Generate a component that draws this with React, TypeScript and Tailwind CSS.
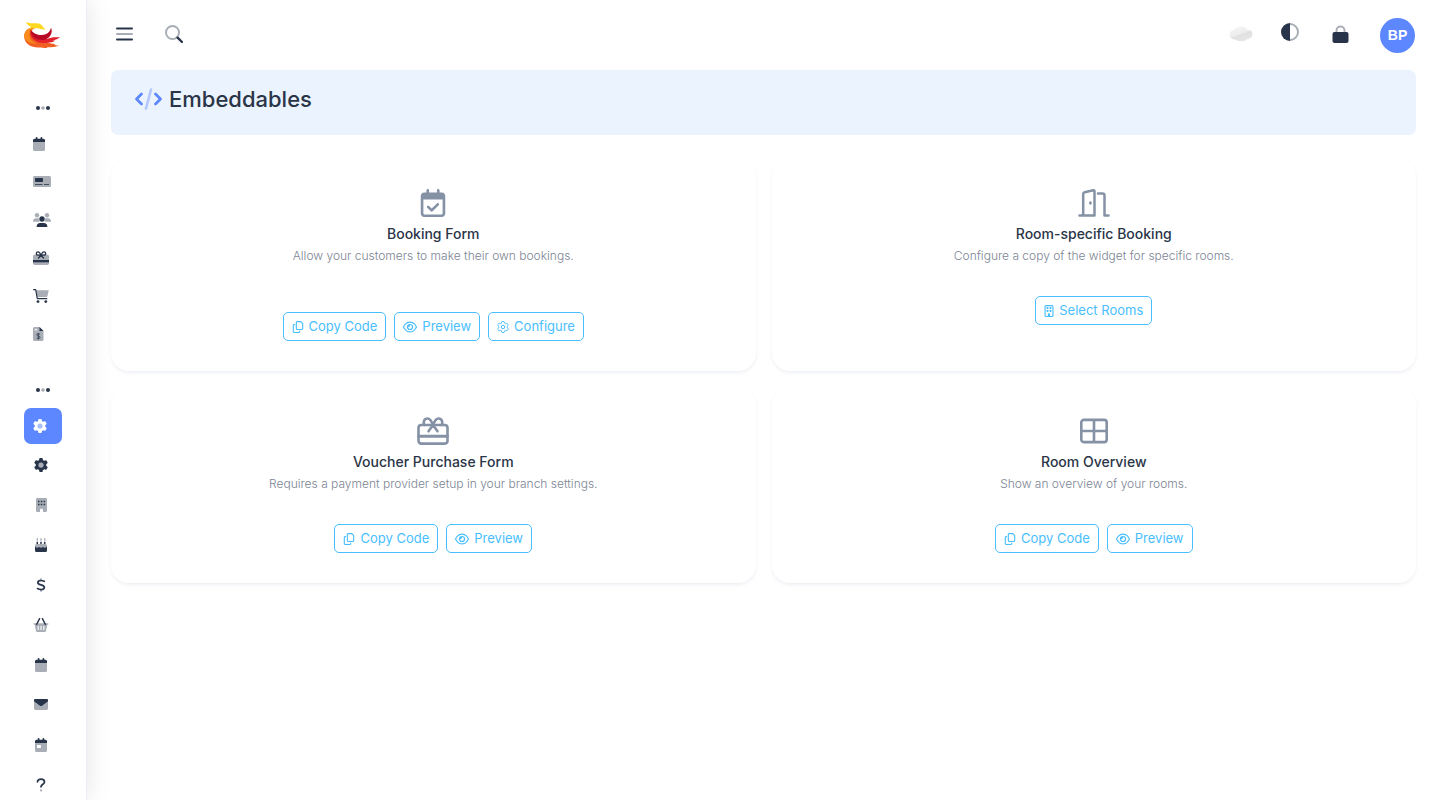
import type { ReactNode } from "react";
import { FaRegBuilding, FaRegCalendarCheck, FaRegCopy, FaRegEye } from "react-icons/fa6";

const DARK = "#283449";
const SOFT = "#a9aeb6";

const GEAR =
  "M495.9 166.6c3.2 8.7 .5 18.4-6.4 24.6l-43.3 39.4c1.1 8.3 1.7 16.8 1.7 25.4s-.6 17.1-1.7 25.4l43.3 39.4c6.9 6.2 9.6 15.9 6.4 24.6c-4.4 11.9-9.7 23.3-15.8 34.3l-4.7 8.1c-6.6 11-14 21.4-22.1 31.2c-5.9 7.2-15.7 9.6-24.5 6.8l-55.7-17.7c-13.4 10.3-28.2 18.9-44 25.4l-12.5 57.1c-2 9.1-9 16.3-18.2 17.8c-13.8 2.3-28 3.5-42.5 3.5s-28.7-1.2-42.5-3.5c-9.2-1.5-16.2-8.7-18.2-17.8l-12.5-57.1c-15.8-6.5-30.6-15.1-44-25.4L83.1 425.9c-8.8 2.8-18.6 .3-24.5-6.8c-8.1-9.8-15.5-20.2-22.1-31.2l-4.7-8.1c-6.1-11-11.4-22.4-15.8-34.3c-3.2-8.7-.5-18.4 6.4-24.6l43.3-39.4C64.6 273.1 64 264.6 64 256s.6-17.1 1.7-25.4L22.4 191.2c-6.9-6.2-9.6-15.9-6.4-24.6c4.4-11.9 9.7-23.3 15.8-34.3l4.7-8.1c6.6-11 14-21.4 22.1-31.2c5.9-7.2 15.7-9.6 24.5-6.8l55.7 17.7c13.4-10.3 28.2-18.9 44-25.4l12.5-57.1c2-9.1 9-16.3 18.2-17.8C227.3 1.2 241.5 0 256 0s28.7 1.2 42.5 3.5c9.2 1.5 16.2 8.7 18.2 17.8l12.5 57.1c15.8 6.5 30.6 15.1 44 25.4l55.7-17.7c8.8-2.8 18.6-.3 24.5 6.8c8.1 9.8 15.5 20.2 22.1 31.2l4.7 8.1c6.1 11 11.4 22.4 15.8 34.3z";

function Svg({ w, h, children }: { w: number; h: number; children: ReactNode }) {
  return (
    <svg width={w} height={h} viewBox={`0 0 ${w} ${h}`} fill="none" aria-hidden="true" className="shrink-0">
      {children}
    </svg>
  );
}

function Logo() {
  return (
    <svg width="37" height="28" viewBox="0 0 37 28" aria-hidden="true">
      <path d="M9 6.500C3 7 0 11 .2 16C.6 22.500 7 26.500 14 26.500C18 26.300 20 27.300 23 27C24 26.600 23 26.300 23 25.900C28 26.500 32 26 35 24.600C31 24.500 30 23.500 31 23C28 23 26 22 23 21.500C14 20 8 16 8 10Z" fill="#f15f22" />
      <path d="M.2 16C0 10 4 6.500 10 6.500L12 7C8 8 5.500 11 5.500 14C5.500 18 8 21 13 22.500C7 22.500 2 21 .2 16Z" fill="#fa8b1c" />
      <path d="M6.500 9C5 16 10 21 18 22C24 22.500 30 21 31 19.500L28 19.500C31 19 35 17.500 36.500 16C32 16.600 29 15.500 26 17C19 20 10 16 6.500 9Z" fill="#e3212b" />
      <path d="M6.500 8.500C9.500 12.500 13 14 17.500 14C22.500 14 26.500 11 27 6.500C29.500 12 25.500 19 18 19C11 19 7 15 6.500 8.500Z" fill="#b80a24" />
      <path d="M2 1C6 3 11 1.600 15 2.500C18 3.200 19 7 22 8.300C18 9 15 7 11 7C9 7 7 7.500 5 8.300C6 7 6.500 6.500 7 5.700C5 5 3 3.500 2 1Z" fill="#ffd91f" />
    </svg>
  );
}

function Dots() {
  return (
    <Svg w={14} h={4}>
      <circle cx="2" cy="2" r="2" fill={DARK} />
      <circle cx="7" cy="2" r="1.800" fill={SOFT} />
      <circle cx="12" cy="2" r="2" fill={DARK} />
    </Svg>
  );
}

function Calendar({ day = false }: { day?: boolean }) {
  return (
    <Svg w={12} h={14}>
      <path d="M0 5H12V12.500A1.500 1.500 0 0 1 10.500 14H1.500A1.500 1.500 0 0 1 0 12.500Z" fill={SOFT} />
      <path d="M0 5V3.200A1.500 1.500 0 0 1 1.500 1.700H2.700V1A.9 .9 0 0 1 4.500 1V1.700H7.500V1A.9 .9 0 0 1 9.300 1V1.700H10.500A1.500 1.500 0 0 1 12 3.200V5Z" fill={DARK} />
      {day && <rect x="2" y="7" width="4" height="3" rx=".5" fill="#fff" />}
    </Svg>
  );
}

function CashRegister() {
  return (
    <Svg w={18} h={12}>
      <rect width="18" height="11" rx="1.500" fill={SOFT} />
      <rect x="2" y="2" width="8" height="4" rx=".8" fill={DARK} />
      <path d="M2 8.500H9.500M11 8.500H16" stroke={DARK} strokeWidth=".8" />
    </Svg>
  );
}

function Users() {
  return (
    <Svg w={18} h={14}>
      <g fill={SOFT}>
        <circle cx="4" cy="2.200" r="2.200" />
        <circle cx="14" cy="2.200" r="2.200" />
        <path d="M0 8.300C0 6.500 1.200 5.200 2.800 5.200H4.500C5.200 5.200 5.700 5.400 6 5.600C5.700 7 6 7.800 6.700 8.700H0Z" />
        <path d="M18 8.300C18 6.500 16.800 5.200 15.200 5.200H13.500C12.800 5.200 12.300 5.400 12 5.600C12.300 7 12 7.800 11.300 8.700H18Z" />
      </g>
      <circle cx="9" cy="6" r="2.700" fill={DARK} />
      <path d="M3.600 14C3.600 11.500 5 10 7.200 10H10.800C13 10 14.400 11.500 14.400 14Z" fill={DARK} />
    </Svg>
  );
}

function GiftCard() {
  return (
    <Svg w={16} h={14}>
      <rect y="3.500" width="16" height="10.500" rx="1.800" fill={SOFT} />
      <rect y="9" width="16" height="2.300" fill={DARK} />
      <path d="M8 4.200C7 1.500 6 .8 5 .8A1.700 1.700 0 0 0 5 4.200H11A1.700 1.700 0 0 0 11 .8C10 .8 9 1.500 8 4.200L5.500 7M8 4.200L10.500 7" stroke={DARK} strokeWidth="1.300" strokeLinecap="round" />
    </Svg>
  );
}

function Cart() {
  return (
    <Svg w={16} h={14}>
      <path d="M3 1.200H15.800L14.400 7.200A1 1 0 0 1 13.400 8H4.300Z" fill={SOFT} />
      <path d="M.6 .7H2.700L4.300 9.700H13.800" stroke={DARK} strokeWidth="1.200" strokeLinecap="round" strokeLinejoin="round" />
      <circle cx="5" cy="12.600" r="1.400" fill={DARK} />
      <circle cx="12.800" cy="12.600" r="1.400" fill={DARK} />
    </Svg>
  );
}

function Invoice() {
  return (
    <Svg w={11} h={14}>
      <path d="M1.500 0H6.500L10.500 4V12.500A1.500 1.500 0 0 1 9 14H1.500A1.500 1.500 0 0 1 0 12.500V1.500A1.500 1.500 0 0 1 1.500 0Z" fill={SOFT} />
      <path d="M6.500 0L10.500 4H6.500Z" fill={DARK} />
      <rect x="1.800" y="1.800" width="2.400" height="1.800" fill="#e8e9eb" />
      <path d="M7 7.200C4.500 6.200 3.400 7.300 3.800 8.200C4.300 9.300 7 8.900 7 10.400C7 11.700 5 11.800 3.600 11M5.300 6V12.500" stroke={DARK} strokeWidth=".8" />
    </Svg>
  );
}

function Gear({ body, core }: { body: string; core: string }) {
  return (
    <svg width="14" height="14" viewBox="0 0 512 512" aria-hidden="true" className="shrink-0">
      <path d={GEAR} fill={body} />
      <circle cx="256" cy="256" r="96" fill={core} />
    </svg>
  );
}

function Hotel() {
  return (
    <Svg w={11} h={14}>
      <path d="M1.200 0H9.800A1.200 1.200 0 0 1 11 1.200V12.800A1.200 1.200 0 0 1 9.800 14H7V12A1.500 1.500 0 0 0 4 12V14H1.200A1.200 1.200 0 0 1 0 12.800V1.200A1.200 1.200 0 0 1 1.200 0Z" fill={SOFT} />
      <path d="M2 3.500H3.500M4.800 3.500H6.300M7.600 3.500H9.100M2 6.500H3.500M4.800 6.500H6.300M7.600 6.500H9.100" stroke={DARK} strokeWidth="1.300" />
    </Svg>
  );
}

function Cake() {
  return (
    <Svg w={12} h={14}>
      <path d="M2.300 .3V2.800M6 .3V2.800M9.700 .3V2.800" stroke={SOFT} strokeWidth="1.400" />
      <path d="M2.300 3.700V6M6 3.700V6M9.700 3.700V6" stroke={DARK} strokeWidth="1.500" />
      <path d="M0 9V7.500A1.500 1.500 0 0 1 1.500 6H10.500A1.500 1.500 0 0 1 12 7.500V10H0Z" fill={SOFT} />
      <path d="M0 8.500C1.500 10 2.500 10 4 9C5.500 10 6.500 10 8 9C9.500 10 10.500 10 12 8.500V12.500A1.500 1.500 0 0 1 10.500 14H1.500A1.500 1.500 0 0 1 0 12.500Z" fill={DARK} />
    </Svg>
  );
}

function Dollar() {
  return (
    <Svg w={10} h={14}>
      <path d="M5 .7V2.500M5 11.500V13.300" stroke={SOFT} strokeWidth="1.500" strokeLinecap="round" />
      <path d="M8.200 3.300C6 2.200 2 2 1.800 4.500C1.700 7.800 8.300 5.900 8.300 9.300C8.300 12.200 4 12 1.500 10.600" stroke={DARK} strokeWidth="1.700" strokeLinecap="round" />
    </Svg>
  );
}

function Basket() {
  return (
    <Svg w={16} h={14}>
      <path d="M.7 5.300H15.300V6.800H14.300L13 12.800A1.400 1.400 0 0 1 11.600 14H4.400A1.400 1.400 0 0 1 3 12.800L1.700 6.800H.7Z" fill={SOFT} />
      <path d="M5.200 8V12M8 8V12M10.800 8V12" stroke="#fff" strokeWidth="1.100" />
      <path d="M6.600 .6L3.600 6.300M9.400 .6L12.400 6.300" stroke={DARK} strokeWidth="1.400" strokeLinecap="round" />
    </Svg>
  );
}

function Mail() {
  return (
    <Svg w={14} h={12}>
      <rect width="14" height="11" rx="1.400" fill={SOFT} />
      <path d="M0 1.300A1.300 1.300 0 0 1 1.300 0H12.700A1.300 1.300 0 0 1 14 1.300V2.200L8 6.700A1.600 1.600 0 0 1 6 6.700L0 2.200Z" fill={DARK} />
    </Svg>
  );
}

function Question() {
  return (
    <Svg w={10} h={14}>
      <path d="M1.500 3.800C1.500 2 2.800 1.200 5 1.200C7.200 1.200 8.500 2.300 8.500 3.900C8.500 6.200 5 6.200 5 8.800" stroke={DARK} strokeWidth="1.700" strokeLinecap="round" />
      <circle cx="5" cy="12.400" r="1.100" fill={SOFT} />
    </Svg>
  );
}

const primaryNav: { label: string; icon: ReactNode }[] = [
  { label: "Calendar", icon: <Calendar /> },
  { label: "Register", icon: <CashRegister /> },
  { label: "Customers", icon: <Users /> },
  { label: "Vouchers", icon: <GiftCard /> },
  { label: "Shop", icon: <Cart /> },
  { label: "Invoices", icon: <Invoice /> },
];

const settingsNav: { label: string; icon: ReactNode }[] = [
  { label: "General", icon: <Gear body={DARK} core={SOFT} /> },
  { label: "Branches", icon: <Hotel /> },
  { label: "Parties", icon: <Cake /> },
  { label: "Pricing", icon: <Dollar /> },
  { label: "Products", icon: <Basket /> },
  { label: "Schedule", icon: <Calendar /> },
  { label: "Mail", icon: <Mail /> },
  { label: "Events", icon: <Calendar day /> },
  { label: "Help", icon: <Question /> },
];

function Sidebar() {
  return (
    <aside className="sticky top-0 flex h-screen w-[87px] shrink-0 flex-col overflow-hidden border-r border-[#e9eff4] bg-white px-6 shadow-[0_0_24px_rgba(0,0,0,0.11)]">
      <a href="#home" aria-label="Home" className="mt-[21px] block h-[69px] w-[37px] shrink-0">
        <Logo />
      </a>
      <nav aria-label="Main" className="flex flex-col">
        <div className="flex h-9 w-[38px] shrink-0 items-center justify-center">
          <Dots />
        </div>
        <ul className="flex flex-col gap-0.5">
          {primaryNav.map((item) => (
            <li key={item.label}>
              <a href="#nav" aria-label={item.label} className="flex h-9 w-[38px] items-center pl-[9px]">
                {item.icon}
              </a>
            </li>
          ))}
        </ul>
        <div className="mt-5 flex h-9 w-[38px] shrink-0 items-center justify-center">
          <Dots />
        </div>
        <a href="#settings" aria-label="Settings" className="flex h-9 w-[38px] shrink-0 items-center rounded-[7px] bg-[#5d87ff] pl-[9px]">
          <Gear body="#fff" core="#a9c0ff" />
        </a>
        <ul className="mt-[3px] flex flex-col gap-1">
          {settingsNav.map((item) => (
            <li key={item.label}>
              <a href="#settings" aria-label={item.label} className="flex h-9 w-[34px] items-center justify-center">
                {item.icon}
              </a>
            </li>
          ))}
        </ul>
      </nav>
    </aside>
  );
}

function Header() {
  return (
    <header className="flex h-[70px] items-center justify-between pr-px pl-[5px]">
      <div className="flex items-center gap-8 pb-0.5">
        <button type="button" aria-label="Toggle menu">
          <Svg w={17} h={16}>
            <path d="M1 2.500H16M1 13.500H16" stroke={DARK} strokeWidth="2" strokeLinecap="round" />
            <path d="M1 8H16" stroke={SOFT} strokeWidth="2" strokeLinecap="round" />
          </Svg>
        </button>
        <button type="button" aria-label="Search">
          <Svg w={18} h={20}>
            <circle cx="7.500" cy="8.500" r="6.500" stroke={SOFT} strokeWidth="2" />
            <path d="M12.600 13.600L17 18" stroke={DARK} strokeWidth="2.300" strokeLinecap="round" />
          </Svg>
        </button>
      </div>
      <div className="flex items-center">
        <div className="mr-[31px] flex items-center pb-0.5">
          <button type="button" aria-label="Weather" className="mr-7">
            <Svg w={24} h={18}>
              <defs>
                <linearGradient id="cloud" x1="8" y1="2" x2="13" y2="16" gradientUnits="userSpaceOnUse">
                  <stop stopColor="#f5f5f5" />
                  <stop offset=".5" stopColor="#ececec" />
                  <stop offset=".6" stopColor="#e0e0e0" />
                  <stop offset="1" stopColor="#e6e6e6" />
                </linearGradient>
              </defs>
              <path d="M5 4.500C6 2.300 9 1.500 12 1.500S17.500 2.200 18.300 4.700C21.500 4.500 23.500 6.500 23.500 9C23.500 12 21 14 18 14.200C16.500 16.500 9 17 6.500 14.500C3 14.500 .7 12.500 .6 9.500C.5 7 2.500 5 5 4.500Z" fill="url(#cloud)" />
            </Svg>
          </button>
          <button type="button" aria-label="Toggle theme" className="mr-[33px] pb-1">
            <Svg w={18} h={18}>
              <path d="M9 1A8 8 0 0 1 9 17" stroke={SOFT} strokeWidth="2" />
              <path d="M9 0A9 9 0 0 0 9 18Z" fill={DARK} />
            </Svg>
          </button>
          <button type="button" aria-label="Lock">
            <Svg w={17} h={18}>
              <path d="M4.500 8V5.500A4 4 0 0 1 12.500 5.500V8" stroke={SOFT} strokeWidth="2" />
              <rect x=".5" y="7" width="16" height="11" rx="2" fill={DARK} />
            </Svg>
          </button>
        </div>
        <button type="button" aria-label="Account" className="flex size-[35px] items-center justify-center rounded-full bg-[#5d87ff] font-['Liberation_Sans',sans-serif] text-sm font-bold text-white">
          BP
        </button>
      </div>
    </header>
  );
}

function DoorIcon() {
  return (
    <svg width="32" height="28" viewBox="0 0 32 28" fill="none" stroke="currentColor" strokeWidth="2.500" strokeLinecap="round" strokeLinejoin="round" aria-hidden="true">
      <path d="M1.500 26.500H16.500V2.200A1 1 0 0 0 15.300 1.200L6.700 3.300A2 2 0 0 0 5.200 5.200V26.500" />
      <path d="M20 4.500H24.500A2 2 0 0 1 26.500 6.500V26.500H30.500" />
      <ellipse cx="12.400" cy="14" rx="1.400" ry="1.800" fill="currentColor" stroke="none" />
    </svg>
  );
}

function VoucherIcon() {
  return (
    <svg width="32" height="28" viewBox="0 0 32 28" fill="none" stroke="currentColor" strokeWidth="2.600" strokeLinecap="round" strokeLinejoin="round" aria-hidden="true">
      <rect x="1.500" y="8" width="29" height="18.600" rx="2.800" />
      <path d="M1.500 19.200H30.500" strokeWidth="3" />
      <path d="M16 8C14.500 4 13 1.500 10.500 1.500C7.300 1.500 5.800 5 7.300 8M16 8C17.500 4 19 1.500 21.500 1.500C24.700 1.500 26.200 5 24.700 8M16 8L11.500 14.300M16 8L20.500 14.300" />
    </svg>
  );
}

function TableIcon() {
  return (
    <svg width="28" height="28" viewBox="0 0 28 28" fill="none" stroke="currentColor" strokeWidth="2.600" aria-hidden="true">
      <rect x="1.300" y="2.900" width="25.400" height="22.200" rx="2.600" />
      <path d="M14 3V25M1.500 14H26.500" />
    </svg>
  );
}

function ConfigureIcon() {
  return (
    <svg width="12" height="12" viewBox="-20 -20 552 552" fill="none" stroke="currentColor" strokeWidth="46" aria-hidden="true">
      <path d={GEAR} />
      <circle cx="256" cy="256" r="80" />
    </svg>
  );
}

type Action = "copy" | "preview" | "configure" | "rooms";

const actions: Record<Action, { label: string; icon: ReactNode }> = {
  copy: { label: "Copy Code", icon: <FaRegCopy className="size-3" /> },
  preview: { label: "Preview", icon: <FaRegEye className="size-[14px]" /> },
  configure: { label: "Configure", icon: <ConfigureIcon /> },
  rooms: { label: "Select Rooms", icon: <FaRegBuilding className="h-3 w-[10px]" /> },
};

const cards: { title: string; text: string; icon: ReactNode; actions: Action[]; roomy?: boolean }[] = [
  {
    title: "Booking Form",
    text: "Allow your customers to make their own bookings.",
    icon: <FaRegCalendarCheck className="size-7" />,
    actions: ["copy", "preview", "configure"],
    roomy: true,
  },
  {
    title: "Room-specific Booking",
    text: "Configure a copy of the widget for specific rooms.",
    icon: <DoorIcon />,
    actions: ["rooms"],
  },
  {
    title: "Voucher Purchase Form",
    text: "Requires a payment provider setup in your branch settings.",
    icon: <VoucherIcon />,
    actions: ["copy", "preview"],
  },
  {
    title: "Room Overview",
    text: "Show an overview of your rooms.",
    icon: <TableIcon />,
    actions: ["copy", "preview"],
  },
];

export default function App() {
  return (
    <div className="flex min-h-screen bg-white font-['Inter',sans-serif] text-[#2a3547]">
      <Sidebar />
      <div className="min-w-0 flex-1 px-6">
        <Header />
        <main>
          <div className="flex h-[65px] items-start gap-[7px] rounded-[7px] bg-[#ebf3fe] px-6 pt-4">
            <svg width="27" height="22" viewBox="0 0 27 22" fill="none" strokeLinecap="round" strokeLinejoin="round" className="mt-[2px]" aria-hidden="true">
              <path d="M6.500 6L1.500 11L6.500 16M20.500 6L25.500 11L20.500 16" stroke="#5d87ff" strokeWidth="2.700" />
              <path d="M16 1.500L11 20.500" stroke="#b4c8ff" strokeWidth="2.600" />
            </svg>
            <h1 className="text-[22px] leading-[26px] font-medium">Embeddables</h1>
          </div>
          <div className="mt-6 grid grid-cols-2 gap-4">
            {cards.map((card) => (
              <section key={card.title} className="flex flex-col items-center rounded-[18px] bg-white px-6 pt-[30px] pb-[30px] text-center shadow-[0_2px_4px_-1px_rgba(175,182,201,0.3)]">
                <div className="text-[#8592a6]">{card.icon}</div>
                <h2 className="mt-2 text-[14px] leading-[18px] font-medium">{card.title}</h2>
                <p className="mt-1 text-[12px] leading-[18px] font-light text-[#7c8594]">{card.text}</p>
                <div className={card.roomy ? "mt-[47px] flex gap-2" : "mt-[31px] flex gap-2"}>
                  {card.actions.map((key) => (
                    <button key={key} type="button" className="flex h-[29px] items-center gap-[5px] rounded-[5px] border border-[#49beff] px-2 text-[13px] text-[#49beff]">
                      {actions[key].icon}
                      {actions[key].label}
                    </button>
                  ))}
                </div>
              </section>
            ))}
          </div>
        </main>
      </div>
    </div>
  );
}
